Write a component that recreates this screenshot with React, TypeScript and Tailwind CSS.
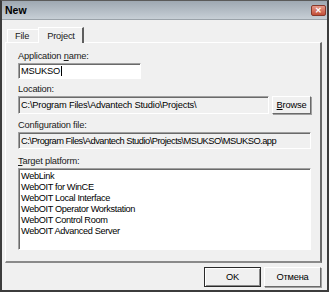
import React from 'react';

const font = { fontFamily: '"Liberation Sans", Arial, sans-serif' };

const platforms = [
  'WebLink',
  'WebOIT for WinCE',
  'WebOIT Local Interface',
  'WebOIT Operator Workstation',
  'WebOIT Control Room',
  'WebOIT Advanced Server',
];

// sunken 3D field edge, classic Windows style
const sunken = 'border-t border-l border-t-[#a0a0a0] border-l-[#a0a0a0] border-b border-r border-b-white border-r-white shadow-[inset_1px_1px_0_#6a6a6a]';

export default function App() {
  return (
    <div className="w-[329px] h-[292px] bg-[#f0f0f0] border-t border-t-[#5a5a5a] border-x-2 border-b-2 border-[#3c3c3c] flex flex-col text-[9.3px] tracking-[-0.2px] text-[#1a1a1a] leading-[12px]" style={font}>
      {/* title bar */}
      <div className="h-[19px] shrink-0 flex items-center justify-between pl-[3px] pr-[1px] bg-gradient-to-b from-[#9ea8b2] to-[#c7cfd6] border-b border-b-[#9aa2a9]">
        <span className="font-bold text-[10.5px] tracking-normal text-black">New</span>
        <div className="w-[15px] h-[11px] mt-[1px] rounded-[2px] bg-gradient-to-b from-[#e5998a] to-[#c24d36] border border-[#86392b] flex items-center justify-center text-white text-[8px] font-bold leading-none">
          ✕
        </div>
      </div>

      {/* tab strip */}
      <div className="flex items-end pl-[5px] h-[22px] shrink-0">
        <div className="h-[13px] pl-[7px] pr-[9px] flex items-center border-t border-l border-white bg-[#f0f0f0]">
          File
        </div>
        <div className="h-[16px] -mb-[1px] pl-[8px] pr-[7px] flex items-center border-t border-l border-white border-r-2 border-r-[#5e5e5e] bg-[#f0f0f0] relative z-10">
          Project
        </div>
      </div>

      {/* tab page */}
      <div className="ml-[3px] mr-[5px] h-[221px] shrink-0 border-t border-l border-white border-r-2 border-b-2 border-r-[#6a6a6a] border-b-[#8a8a8a] pl-[12px] pt-[7px] flex flex-col">
        <div>
          Application <span className="underline">n</span>ame:
        </div>
        <div className={`mt-[1px] w-[123px] h-[16px] bg-white ${sunken} flex items-center pl-[2px] text-black`}>
          MSUKSO<span className="w-px h-[10px] bg-black ml-px" />
        </div>

        <div className="mt-[4px]">Location:</div>
        <div className="mt-[1px] flex items-center gap-[3px]">
          <div className={`w-[251px] h-[18px] bg-[#f0f0f0] ${sunken} flex items-center pl-[2px] whitespace-nowrap overflow-hidden text-black`}>
            C:\Program Files\Advantech Studio\Projects\
          </div>
          <div className="w-[39px] h-[18px] border border-t-white border-l-white border-r-[#6a6a6a] border-b-[#6a6a6a] shadow-[1px_1px_0_#a0a0a0] flex items-center justify-center text-black">
            <span className="underline">B</span>rowse
          </div>
        </div>

        <div className="mt-[5px]">Configuration file:</div>
        <div className={`mt-[1px] w-[293px] h-[17px] bg-[#f0f0f0] ${sunken} flex items-center pl-[2px] whitespace-nowrap overflow-hidden text-black tracking-[-0.5px]`}>
          C:\Program Files\Advantech Studio\Projects\MSUKSO\MSUKSO.app
        </div>

        <div className="mt-[6px]">
          <span className="underline">T</span>arget platform:
        </div>
        <div className={`mt-[1px] w-[293px] h-[82px] bg-white ${sunken} pl-[2px] pt-[1px] flex flex-col text-black`}>
          {platforms.map((p) => (
            <div key={p} className="h-[11px] flex items-center whitespace-nowrap text-[9.2px] tracking-[-0.35px]">
              {p}
            </div>
          ))}
        </div>
      </div>

      {/* buttons */}
      <div className="flex justify-end gap-[3px] pr-[6px] pt-[4px]">
        <div className="w-[57px] h-[20px] border border-[#2a2a2a] flex items-center justify-center shadow-[inset_1px_1px_0_#fff,inset_-1px_-1px_0_#8a8a8a] text-black">
          OK
        </div>
        <div className="w-[57px] h-[20px] border border-t-white border-l-white border-r-[#6a6a6a] border-b-[#6a6a6a] shadow-[1px_1px_0_#a0a0a0] flex items-center justify-center text-black">
          Отмена
        </div>
      </div>
    </div>
  );
}
